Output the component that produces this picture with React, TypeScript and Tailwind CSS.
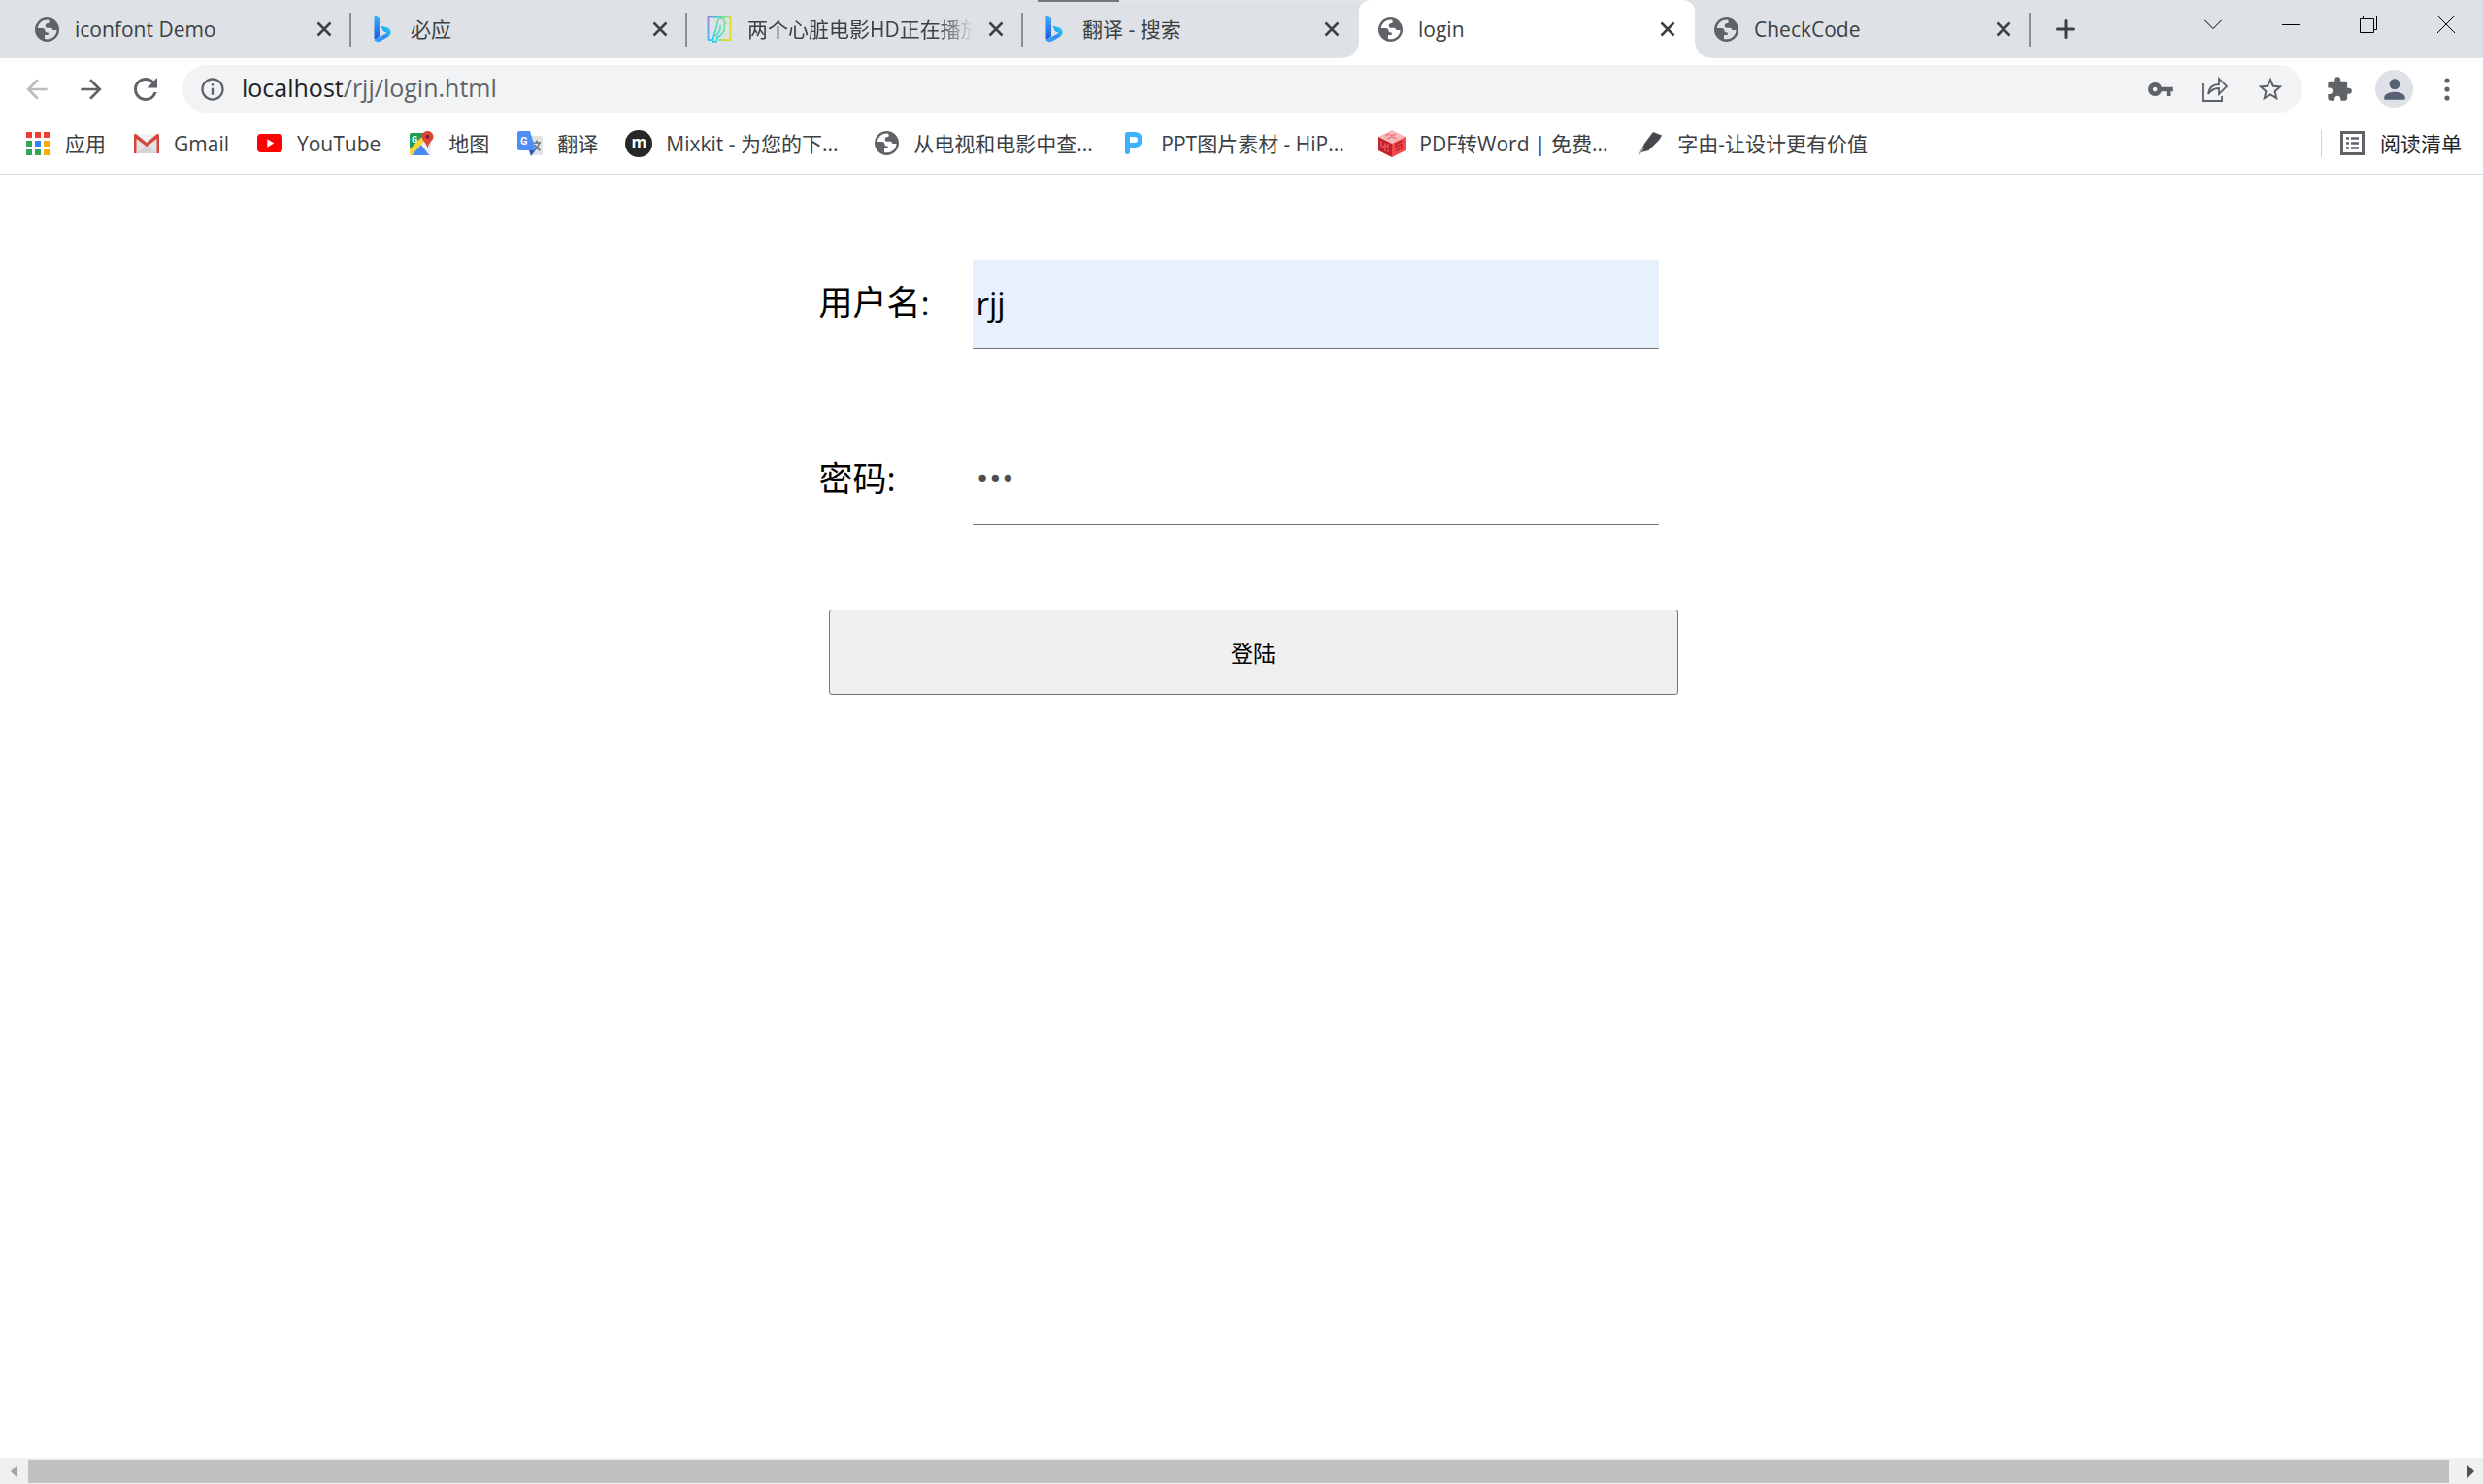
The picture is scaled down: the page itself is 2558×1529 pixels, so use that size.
import type { ReactNode } from "react"
import {
  MdArrowBack,
  MdArrowForward,
  MdExtension,
  MdOutlineInfo,
  MdPerson,
  MdRefresh,
  MdStarBorder,
  MdVpnKey
} from "react-icons/md"

const GlobeIcon = () => (
  <svg viewBox="0 0 24 24" className="size-[25px] shrink-0">
    <path
      fillRule="evenodd"
      fill="#5f6368"
      d="M12 0a12 12 0 1 0 0 24a12 12 0 1 0 0-24zM13.500 2.600C8.500 1.800 3.600 5 2.600 10.500h4.900c1.500 0 2.500 1 2.500 2.500 0 1.300 1 1.800 2 1.800h1.200v2.400h-3.600v4C16 22.500 21.400 18 21.600 12.400h-3c-1.200 0-2-.8-2-2h-4c-1.500 0-2.300-1-2.300-2.300s1-2.300 2.300-2.300c1 0 1.500-.8 1.500-1.600 0-.8-.2-1.300-.6-1.600z"
    />
  </svg>
)

const BingIcon = () => (
  <svg viewBox="0 0 20 28" className="h-7 w-[25px] shrink-0">
    <defs>
      <linearGradient id="bing-stem" x1="0" y1="0" x2="0" y2="1">
        <stop offset="0" stopColor="#3fb1ff" />
        <stop offset="1" stopColor="#1f55e0" />
      </linearGradient>
      <linearGradient id="bing-bowl" x1="1" y1="0" x2="0" y2="1">
        <stop offset="0" stopColor="#25e0e8" />
        <stop offset="0.5" stopColor="#2f8cf0" />
        <stop offset="1" stopColor="#35a8ff" />
      </linearGradient>
    </defs>
    <path
      d="M8 10.500l2.200 5.500 4 2L1 25c1 2 3.500 2.800 6 1.700l8-4.600c4-2.400 4.200-7.600 0-9.500z"
      fill="url(#bing-bowl)"
    />
    <path d="M1 1.300C1 .4 1.700 0 2.500.4l3 1.800c.6.4 1 1 1 1.700v17.600L3 24c-1.200.7-2 .2-2-1z" fill="url(#bing-stem)" />
  </svg>
)

const BirdIcon = () => (
  <svg viewBox="0 0 26 28" className="h-7 w-[26px] shrink-0" fill="none">
    <defs>
      <linearGradient id="bird-frame" x1="0" y1="0" x2="1" y2="0.3">
        <stop offset="0" stopColor="#9b7fd0" />
        <stop offset="0.35" stopColor="#2fc9f5" />
        <stop offset="0.7" stopColor="#7fe08a" />
        <stop offset="1" stopColor="#e2dc28" />
      </linearGradient>
      <linearGradient id="bird-body" x1="0" y1="1" x2="1" y2="0">
        <stop offset="0" stopColor="#22c8f5" />
        <stop offset="0.5" stopColor="#4fe0c0" />
        <stop offset="1" stopColor="#8be070" />
      </linearGradient>
    </defs>
    <path d="M5 25H1.500V1.500h23V25H12" stroke="url(#bird-frame)" strokeWidth="1.800" strokeLinejoin="round" />
    <path
      d="M11.500 5.500c1-3.500 6-3.500 6.500 0l1.500 3-1.500.5c1.500 5-1 9.500-5 12.500l-2 1-1 4.500H6.500l.5-5 3-9c.8-2.500.5-5 1.500-7.500zM14 10c1 4-1.500 8-5 11.500"
      stroke="url(#bird-body)"
      strokeWidth="1.600"
    />
  </svg>
)

const AppsIcon = () => (
  <svg viewBox="0 0 24 24" className="size-6 shrink-0">
    <path d="M0 0h6v6H0zM9 0h6v6H9zM18 0h6v6h-6z" fill="#f23b30" />
    <path d="M0 9h6v6H0zM0 18h6v6H0zM9 18h6v6H9z" fill="#33a456" />
    <path d="M9 9h6v6H9z" fill="#2a85f5" />
    <path d="M18 9h6v6h-6zM18 18h6v6h-6z" fill="#fbab05" />
  </svg>
)

const GmailIcon = () => (
  <svg viewBox="0 0 26 20" className="h-5 w-[26px] shrink-0">
    <rect width="26" height="20" rx="1.500" fill="#e3e3e3" />
    <path d="M3 20l10-9 10 9z" fill="#d4d4d4" />
    <path d="M3 0l10 8 10-8z" fill="#f4f4f4" />
    <path d="M0 1.500C0 .4 1.500-.4 2.600.5L13 9 23.400.5C24.500-.4 26 .4 26 1.500V20h-2.500V5L13 13 2.500 5v15H0z" fill="#d8453a" />
  </svg>
)

const YoutubeIcon = () => (
  <svg viewBox="0 0 26 19" className="h-[19px] w-[26px] shrink-0">
    <rect width="26" height="19" rx="4" fill="#f00" />
    <path d="M10.300 5.300v8.400l7-4.200z" fill="#fff" />
  </svg>
)

const MapsIcon = () => (
  <svg viewBox="0 0 26 26" className="size-[26px] shrink-0">
    <rect x="1" y="2" width="22" height="23" rx="2" fill="#e9e9e9" />
    <path d="M3 2h15L1 19V4c0-1.100.9-2 2-2z" fill="#1f9d58" />
    <path d="M18 2L1 19v4c0 1 .6 2 1.600 2L22 4c0-1-1-2-2-2z" fill="#fdd436" />
    <path d="M3 25l10-11 8.500 11z" fill="#4a8af4" />
    <path d="M13 14l2-2 8 8v4l-1.500 1z" fill="#f1f1f1" />
    <text x="3" y="12" fontSize="9" fontWeight="700" fill="#fff" fontFamily="Roboto, sans-serif">
      G
    </text>
    <path d="M19.500 0c-3.400 0-6 2.500-6 5.800 0 4.500 5 5.700 6 12.200 1-6.500 6-7.700 6-12.200C25.500 2.500 22.900 0 19.500 0z" fill="#dc4638" />
    <circle cx="19.500" cy="5.800" r="2" fill="#7c231c" />
  </svg>
)

const TranslateIcon = () => (
  <svg viewBox="0 0 26 26" className="size-[26px] shrink-0">
    <path d="M11 5h13c1.100 0 2 .9 2 2v16c0 1.100-.9 2-2 2h-8z" fill="#e2e2e2" />
    <path d="M12 20h6.500L14 26z" fill="#3059b8" />
    <path d="M2 0h11l6 20H2c-1.100 0-2-.9-2-2V2C0 .9.900 0 2 0z" fill="#4f8ef5" />
    <text x="3" y="14" fontSize="11" fontWeight="700" fill="#fff" fontFamily="Roboto, sans-serif">
      G
    </text>
    <path d="M16.500 12H24M20 9.500V12M22.500 12c-.5 3-2 5.500-4.500 7.500M18 14c1 2.500 3 5 5.500 6" stroke="#60757f" strokeWidth="1.500" fill="none" />
  </svg>
)

const MixkitIcon = () => (
  <span className="flex size-7 shrink-0 items-center justify-center rounded-full bg-[#272727] pb-1 font-['Open_Sans',sans-serif] text-base font-bold text-white">
    m
  </span>
)

const PptIcon = () => (
  <svg viewBox="0 0 18 23" className="h-[23px] w-[18px] shrink-0" fill="none">
    <path d="M2.500 20.500V2.500H10c3.500 0 5.500 2.200 5.500 5.500s-2 5.500-5.500 5.500H3" stroke="#3eb2fd" strokeWidth="5" strokeLinejoin="round" strokeLinecap="round" />
  </svg>
)

const PdfIcon = () => (
  <svg viewBox="0 0 28 28" className="size-7 shrink-0">
    <path d="M14 0l14 7-14 7L0 7z" fill="#f9b9b9" />
    <path d="M0 7l14 7v14L0 21z" fill="#c4222b" />
    <path d="M28 7l-14 7v14l14-7z" fill="#f04a4c" />
    <path d="M3 11v5l4 2v-5M7 18v4M10 14v3l-3-1M10 20v3" stroke="#e0565b" strokeWidth="1.500" fill="none" />
    <path d="M25 11l-7 3.500v3l6-3v4l-6 3" stroke="#c4222b" strokeWidth="1.500" fill="none" />
    <path d="M7 6l4-2 3 2 4-2M9 9l5-2 5 2" stroke="#ec7f80" strokeWidth="1.500" fill="none" />
  </svg>
)

const PenIcon = () => (
  <svg viewBox="0 0 26 26" className="size-[26px] shrink-0">
    <path d="M16 1l9 3.500-2.500 4.500-11 11L4 22l-1-1 4-8z" fill="#46484b" />
    <path d="M1 25l5-7" stroke="#a5a5a5" strokeWidth="1.500" />
  </svg>
)

const CloseIcon = () => (
  <svg viewBox="0 0 16 16" className="size-4" stroke="#3c4043" strokeWidth="2.600">
    <path d="M1.500 1.500l13 13M14.500 1.500l-13 13" />
  </svg>
)

const tabs = [
  { title: "iconfont Demo", icon: <GlobeIcon /> },
  { title: "必应", icon: <BingIcon /> },
  { title: "两个心脏电影HD正在播放", icon: <BirdIcon />, fade: true },
  { title: "翻译 - 搜索", icon: <BingIcon />, last: true },
  { title: "login", icon: <GlobeIcon />, active: true },
  { title: "CheckCode", icon: <GlobeIcon /> }
]

const bookmarks = [
  { title: "应用", icon: <AppsIcon /> },
  { title: "Gmail", icon: <GmailIcon /> },
  { title: "YouTube", icon: <YoutubeIcon /> },
  { title: "地图", icon: <MapsIcon /> },
  { title: "翻译", icon: <TranslateIcon /> },
  { title: "Mixkit - 为您的下...", icon: <MixkitIcon />, width: "min-w-[185px]" },
  { title: "从电视和电影中查...", icon: <GlobeIcon />, width: "min-w-[185px]" },
  { title: "PPT图片素材 - HiP...", icon: <PptIcon />, width: "min-w-[196px]" },
  { title: "PDF转Word | 免费...", icon: <PdfIcon />, width: "min-w-[196px]" },
  { title: "字由-让设计更有价值", icon: <PenIcon /> }
]

type TabProps = { title: string; icon: ReactNode; active?: boolean; last?: boolean; fade?: boolean }

const Tab = ({ title, icon, active, last, fade }: TabProps) => (
  <div
    className={
      active
        ? "relative flex h-full w-[346px] items-center rounded-t-xl bg-white px-5"
        : "relative flex h-full w-[346px] items-center px-5"
    }
  >
    {active && (
      <>
        <span className="absolute bottom-0 -left-4 size-4 bg-[radial-gradient(circle_at_0_0,#dee1e6_15px,#fff_16px)]"></span>
        <span className="absolute -right-4 bottom-0 size-4 bg-[radial-gradient(circle_at_100%_0,#dee1e6_15px,#fff_16px)]"></span>
      </>
    )}
    {icon}
    <span
      className={
        fade
          ? "ml-4 flex-1 overflow-hidden mask-r-from-85% pt-0.5 whitespace-nowrap"
          : "ml-4 flex-1 overflow-hidden pt-0.5 whitespace-nowrap"
      }
    >
      {title}
    </span>
    <button aria-label="Close tab" className="ml-4">
      <CloseIcon />
    </button>
    {!active && !last && <span className="absolute top-[13px] right-0 h-[35px] w-0.5 bg-[#8c9095]"></span>}
  </div>
)

const TabStrip = () => (
  <div className="relative flex h-[60px] bg-[#dee1e6] pl-4 text-[21px] text-[#3c4043]">
    <div className="absolute top-0 left-[1069px] flex h-0.5 w-[422px] bg-[#e5e5e5]">
      <span className="w-[84px] bg-[#777]"></span>
    </div>
    {tabs.map((tab) => (
      <Tab key={tab.title} {...tab} />
    ))}
    <button aria-label="New tab" className="ml-[26px]">
      <svg viewBox="0 0 20 20" className="size-5" stroke="#3c4043" strokeWidth="3" strokeLinecap="round">
        <path d="M10 1.500v17M1.500 10h17" />
      </svg>
    </button>
    <div className="ml-auto flex items-center gap-[62px] pr-[29px] pb-2.5 text-black">
      <button aria-label="Search tabs">
        <svg viewBox="0 0 18 18" className="size-[18px]" fill="none" stroke="currentColor">
          <path d="M0 4.500l9 9 9-9" />
        </svg>
      </button>
      <button aria-label="Minimize">
        <svg viewBox="0 0 18 18" className="size-[18px]" fill="none" stroke="currentColor">
          <path d="M0 9.500h18" />
        </svg>
      </button>
      <button aria-label="Restore">
        <svg viewBox="0 0 18 18" className="size-[18px]" fill="none" stroke="currentColor">
          <path d="M.5 3.500h14v14H.500zM3.500 3.500v-3h14v14h-3" />
        </svg>
      </button>
      <button aria-label="Close">
        <svg viewBox="0 0 18 18" className="size-[18px]" fill="none" stroke="currentColor">
          <path d="M0 0l18 18M18 0L0 18" />
        </svg>
      </button>
    </div>
  </div>
)

const Toolbar = () => (
  <div className="flex items-center pt-[7px] pr-[27px] pl-[22px] text-[#5f6368]">
    <button aria-label="Back" className="text-[#babcbe]">
      <MdArrowBack className="size-8" />
    </button>
    <button aria-label="Forward" className="ml-6">
      <MdArrowForward className="size-8" />
    </button>
    <button aria-label="Reload" className="ml-[22px]">
      <MdRefresh className="size-9" />
    </button>
    <div className="ml-5 flex h-[49px] flex-1 items-center rounded-full bg-[#f1f3f4] pr-[18px] pl-[17px]">
      <MdOutlineInfo className="size-7" />
      <a href="#" className="ml-4 pb-0.5 text-[25px] text-[#5f6368]">
        <span className="text-[#202124]">localhost</span>/rjj/login.html
      </a>
      <button aria-label="Passwords" className="ml-auto">
        <MdVpnKey className="size-7" />
      </button>
      <button aria-label="Share" className="ml-7">
        <svg viewBox="0 0 28 28" className="size-7" fill="none" stroke="currentColor" strokeWidth="1.800">
          <path d="M2 8v18h19v-5" />
          <path d="M7 19c1-7 5-10 11-10V3l8 8-8 8v-6c-5 0-8 1.500-11 6z" />
        </svg>
      </button>
      <button aria-label="Bookmark" className="ml-7">
        <MdStarBorder className="size-[30px]" />
      </button>
    </div>
    <button aria-label="Extensions" className="ml-6">
      <MdExtension className="size-7" />
    </button>
    <button
      aria-label="Profile"
      className="ml-[23px] flex size-[39px] items-center justify-center rounded-full bg-[#dee1e6] text-[#575f75]"
    >
      <MdPerson className="size-8" />
    </button>
    <button aria-label="Menu" className="ml-[25px]">
      <svg viewBox="0 0 20 26" className="h-[26px] w-5" fill="currentColor">
        <circle cx="10" cy="4" r="2.600" />
        <circle cx="10" cy="13" r="2.600" />
        <circle cx="10" cy="22" r="2.600" />
      </svg>
    </button>
  </div>
)

const BookmarksBar = () => (
  <div className="flex h-16 items-center border-b border-[#d9dbde] pr-[22px] pl-[25px] text-[21px] text-[#3c4043]">
    <nav className="flex items-center gap-7">
      {bookmarks.map((bookmark) => (
        <a key={bookmark.title} href="#" className="flex items-center gap-3.5 whitespace-nowrap">
          <span className="flex w-7 justify-center">{bookmark.icon}</span>
          <span className={bookmark.width ? `${bookmark.width} pt-0.5` : "pt-0.5"}>{bookmark.title}</span>
        </a>
      ))}
    </nav>
    <button className="ml-auto flex h-7 items-center gap-4 border-l border-[#cfd1d4] pl-[19px] text-[#202124]">
      <svg viewBox="0 0 25 25" className="size-[25px]" fill="none" stroke="#5f6368">
        <rect x="1.500" y="1.500" width="22" height="22" strokeWidth="3" />
        <path d="M6 7.500h3M11 7.500h8M6 12.500h3M11 12.500h8M6 17.500h3M11 17.500h8" strokeWidth="2.500" />
      </svg>
      <span className="pt-0.5">阅读清单</span>
    </button>
  </div>
)

const LoginForm = () => (
  <form className="mx-auto mt-[88px] w-[875px] text-[35px] text-black" onSubmit={(e) => e.preventDefault()}>
    <div className="flex items-center">
      <label htmlFor="username" className="w-40 pb-1 pl-0.5">
        用户名:
      </label>
      <input
        id="username"
        defaultValue="rjj"
        className="h-[92px] w-[707px] border-b border-[#767676] bg-[#e8f0fe] px-1 pb-0.5 text-[33px] outline-none"
      />
    </div>
    <div className="mt-[89px] flex items-center">
      <label htmlFor="password" className="w-40 pb-1 pl-0.5">
        密码:
      </label>
      <input
        id="password"
        type="password"
        defaultValue="123"
        className="h-[92px] w-[707px] border-b border-[#767676] px-1 pb-1 text-[#4d4d4d] outline-none"
      />
    </div>
    <button className="mt-[87px] ml-3 h-[88px] w-full rounded-[3px] border border-[#767676] bg-[#efefef] pt-0.5 text-[23px]">
      登陆
    </button>
  </form>
)

const ScrollBar = () => (
  <div className="flex h-[27px] items-center justify-between bg-[#f0f0f0] px-[9px]">
    <svg viewBox="0 0 10 14" className="h-3.5 w-2.5" fill="#a3a3a3">
      <path d="M9 0v14L2 7z" />
    </svg>
    <div className="mr-[18px] ml-2.5 h-6 flex-1 bg-[#c1c1c1]"></div>
    <svg viewBox="0 0 8 14" className="h-3.5 w-2" fill="#505050">
      <path d="M1 0v14l7-7z" />
    </svg>
  </div>
)

const App = () => {
  return (
    <div className="flex min-h-screen flex-col bg-white font-['Open_Sans','Noto_Sans_CJK_SC',sans-serif]">
      <header>
        <TabStrip />
        <Toolbar />
        <BookmarksBar />
      </header>
      <main className="flex-1">
        <LoginForm />
      </main>
      <ScrollBar />
    </div>
  )
}

export default App
